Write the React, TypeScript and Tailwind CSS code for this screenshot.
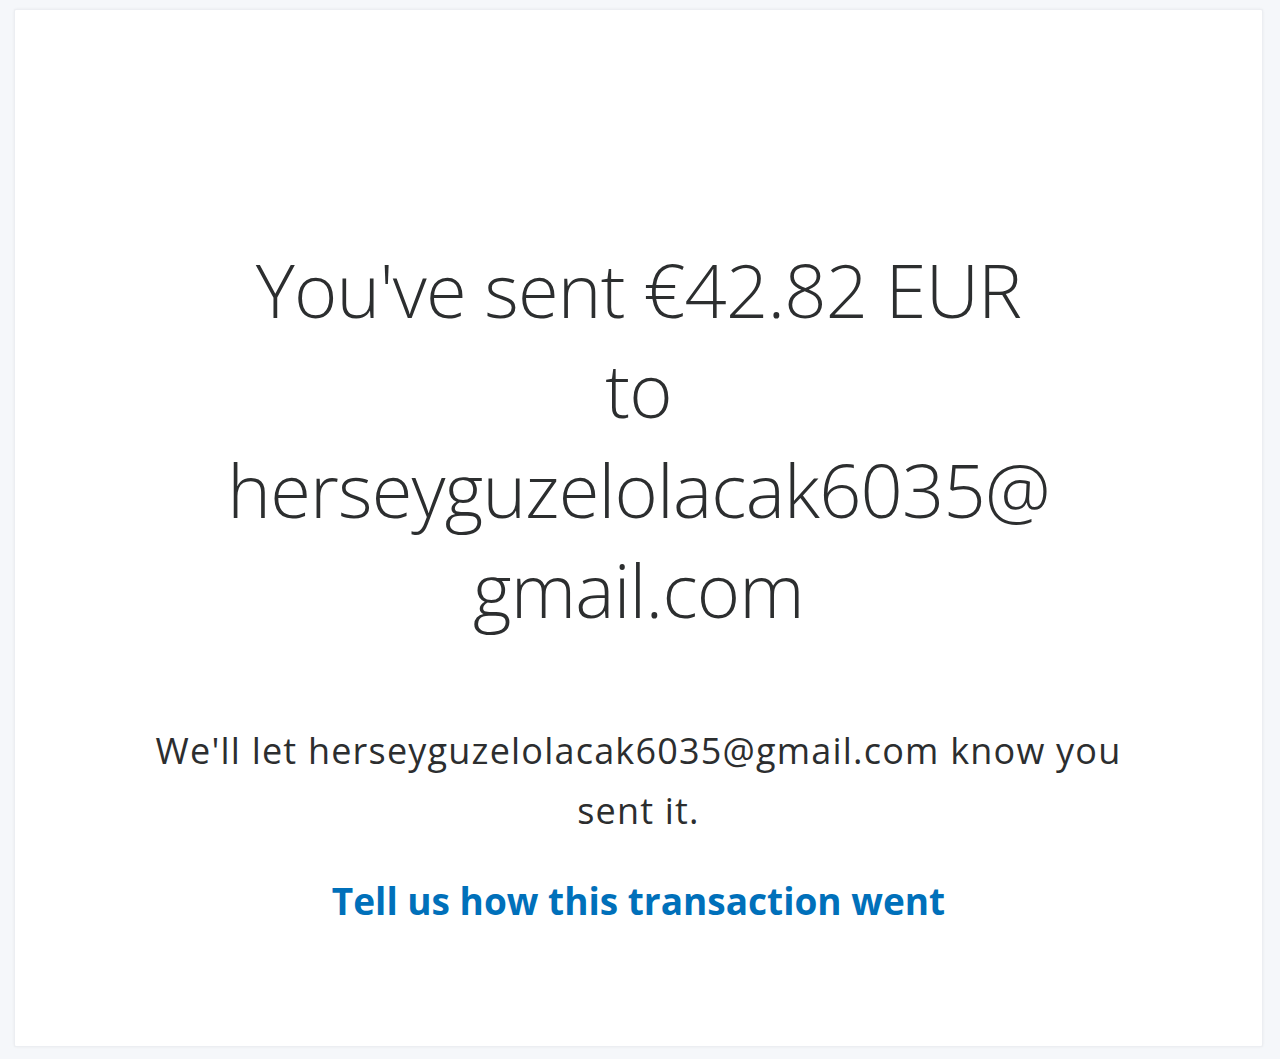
import React from 'react';

export default function App() {
    return (
        <div className="min-h-[1059px] w-full bg-[#f5f7fa] pt-[9px] pl-[14px] pr-[17px] pb-[12px]" style={{ fontFamily: '"Open Sans", Lato, sans-serif' }}>
            <div className="h-[1038px] w-[1249px] rounded-[2px] border border-[#eceef2] bg-white shadow-[0_0_3px_rgba(0,0,0,0.06)] flex flex-col items-center text-center pt-[230px]">
                <h1 className="text-[74px] leading-[100px] font-light text-[#2c2e2f] tracking-[-0.8px]">
                    You've sent €42.82 EUR<br />
                    to<br />
                    herseyguzelolacak6035@<br />
                    gmail.com
                </h1>
                <p className="mt-[81px] max-w-[1100px] text-[36px] leading-[60px] tracking-[1.2px] text-[#2c2e2f]">
                    We'll let herseyguzelolacak6035@gmail.com know you<br />
                    sent it.
                </p>
                <a href="#" className="mt-[30px] text-[37px] leading-[60px] font-bold text-[#0070ba]">
                    Tell us how this transaction went
                </a>
            </div>
        </div>
    );
}
